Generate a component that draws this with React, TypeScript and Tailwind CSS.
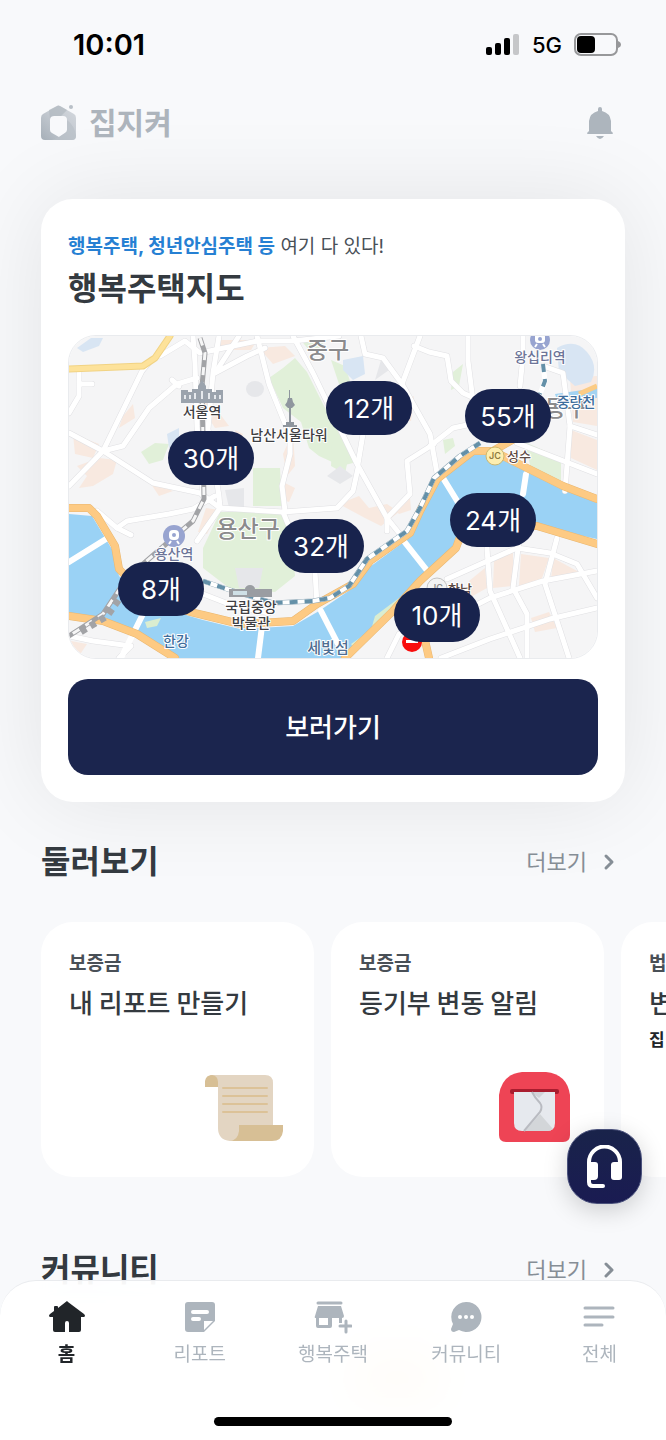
import type { ReactNode } from "react";
import { ChevronRight } from "lucide-react";

type Pin = {
  label: string;
  x: number;
  y: number;
};

type MapLabel = {
  text: string;
  x: number;
  y: number;
  size: number;
  color: string;
};

type ExploreItem = {
  category: string;
  title: string;
  note?: string;
  icon?: ReactNode;
};

type NavItem = {
  label: string;
  icon: ReactNode;
  active?: boolean;
};

const MAP_WIDTH = 528;
const MAP_HEIGHT = 322;

const pins: Pin[] = [
  { label: "12개", x: 300, y: 72 },
  { label: "55개", x: 439, y: 80 },
  { label: "30개", x: 142, y: 122 },
  { label: "24개", x: 424, y: 184 },
  { label: "32개", x: 252, y: 210 },
  { label: "8개", x: 92, y: 253 },
  { label: "10개", x: 368, y: 279 },
];

const mapLabels: MapLabel[] = [
  { text: "중구", x: 259, y: 22, size: 23, color: "#8b8b8d" },
  { text: "용산구", x: 179, y: 201, size: 23, color: "#8b8b8d" },
  { text: "동구", x: 497, y: 80, size: 23, color: "#8b8b8d" },
  { text: "왕십리역", x: 471, y: 26, size: 14, color: "#6d7598" },
  { text: "용산역", x: 105, y: 223, size: 14, color: "#6d7598" },
  { text: "서울역", x: 133, y: 81, size: 14, color: "#3f4043" },
  { text: "남산서울타워", x: 220, y: 104, size: 14, color: "#3f4043" },
  { text: "성수", x: 450, y: 125, size: 13, color: "#5c4a44" },
  { text: "한남", x: 391, y: 258, size: 13, color: "#5c4a44" },
  { text: "중랑천", x: 507, y: 71, size: 14, color: "#3d6d9c" },
  { text: "국립중앙", x: 182, y: 276, size: 14, color: "#3f4043" },
  { text: "박물관", x: 182, y: 292, size: 14, color: "#3f4043" },
  { text: "한강", x: 107, y: 310, size: 14, color: "#3d6d9c" },
  { text: "세빛섬", x: 259, y: 317, size: 15, color: "#4d6d92" },
];

const roads = [
  "M124 0L126 27L128 90L134 160",
  "M150 0L144 37L139 93L150 160L151 172L128 205",
  "M91 20L116 5L131 17L188 5L224 5L270 0",
  "M170 0L146 37L178 20L196 12",
  "M34 115L73 35L82 24",
  "M34 115L54 110L80 72L108 48L128 42M103 44L110 50",
  "M0 97L34 115L84 147L131 157L151 172",
  "M0 150L34 115",
  "M10 37V60L0 77M10 48H23",
  "M188 0L200 48L221 100V118L213 150L216 175",
  "M224 0L244 37L288 128L318 182L334 202",
  "M289 132L284 155L268 172L214 176L151 172",
  "M289 128L294 98V70",
  "M292 0L296 18L314 22L333 48L361 98L368 137",
  "M351 0L333 48M345 10L360 16L378 20L382 45L394 57L412 65",
  "M399 0V25L404 65",
  "M365 108L338 125L341 158L318 182V195",
  "M361 110L384 92L412 86",
  "M454 0V20L451 50",
  "M474 30L494 37L501 90L496 155",
  "M448 107L528 138M501 90L528 99",
  "M28 175L48 192L58 185L100 178L124 173L146 160",
  "M48 192L62 199",
  "M214 176L224 200M246 236L248 268",
  "M134 258L165 270L200 277",
  "M378 243L448 212L481 217L508 228L521 250L528 262",
  "M418 212L421 255L451 322",
  "M450 205L444 252L458 278V322",
  "M488 202L476 248L500 322",
  "M378 284L421 262L474 245L528 235",
  "M372 322L421 303L481 283L528 272",
  "M318 322L330 298L350 290",
  "M0 300L24 305L62 310L50 322",
];

const bridges = [
  "M0 226L37 203",
  "M74 278L52 322",
  "M193 290L189 322",
  "M252 275L270 310",
  "M334 204L360 237",
  "M374 142L390 168",
  "M457 138L454 158",
];

const blocks = [
  "M8 130L30 122L48 124L44 138L24 150L10 152L18 140Z",
  "M4 98L30 108L24 122L6 118Z",
  "M54 80L64 68L66 82L50 92Z",
  "M126 60L142 66L160 90L146 92Z",
  "M150 4H188L182 14H152Z",
  "M190 12L216 10L226 20L204 28Z",
  "M214 118L224 96L226 130L218 140Z",
  "M214 146L226 152L220 166L214 164Z",
  "M270 168L290 160L300 172L318 168L330 176L312 190L296 182Z",
  "M328 70L345 60L342 85L328 85Z",
  "M324 172L341 162L342 174L330 178Z",
  "M137 172L150 174L138 198L129 196Z",
  "M501 42L528 40V90L504 86Z",
  "M502 94L528 104V134L502 122Z",
  "M425 225L444 216V250L424 252Z",
  "M452 218L480 222L472 245L450 250Z",
  "M484 222L510 236L502 240L482 244Z",
  "M400 245L416 232L418 252L400 262Z",
  "M462 282L480 276L488 292L466 296Z",
  "M2 305L18 308L10 320L2 318Z",
  "M80 145L104 155L90 160Z",
  "M166 94L174 98L170 110Z",
];

const mainRoads =
  "M0 172H20L28 180L46 210L50 233Q80 268 134 279L171 288L224 285L248 268L284 248L301 225L341 197L351 175L368 143L404 115H424L448 127L494 150L528 163";
const southRoads =
  "M528 208L468 190L395 190L387 212L351 245L324 275L276 322M0 280L34 285L68 298L106 322M424 115L450 100M355 300L360 322";
const river =
  "M0 178L23 180L44 215L50 240Q80 270 134 284L171 293L224 290L250 275L284 252L302 230L343 200L368 146L404 118H424L448 130L494 153L528 167V203L468 190H395L384 214L351 242L324 272L278 322H104L68 298L34 285L0 280Z";
const railway = "M131 2L136 17L133 50L135 163L124 185L104 202L58 242L34 278L0 300";
const subway =
  "M134 245L164 255L204 267L244 265L261 262L280 250L298 223L338 195L351 172L365 142L391 120L411 107";

function SeoulMap() {
  return (
    <svg
      viewBox={`0 0 ${MAP_WIDTH} ${MAP_HEIGHT}`}
      className="block h-auto w-full"
      role="img"
      aria-label="서울 행복주택 지도"
    >
      <rect width={MAP_WIDTH} height={MAP_HEIGHT} fill="#f5f5f6" />
      {/* Neighbourhood blocks */}
      <g fill="#f8e9e0">
        {blocks.map((d) => (
          <path key={d} d={d} />
        ))}
      </g>
      {/* Parks and ponds */}
      <g fill="#e1f0d9">
        <path d="M200 42L214 32L226 22L238 36L254 68L276 108L288 126L272 130L250 120L240 112L232 86L214 72Z" />
        <path d="M184 132H211L213 170H184Z" />
        <path d="M151 176H213L222 194L226 240L206 256L160 252L134 232V212Z" />
        <path d="M72 116L86 107L100 108L94 124L80 128Z" />
        <path d="M262 24L276 30L284 54L270 48Z" />
        <path d="M264 90L280 118L276 138L262 130Z" />
        <path d="M384 36L394 28L390 50L382 54Z" />
        <path d="M456 106L492 122V148L462 134Z" />
        <path d="M374 104L384 102L386 110L376 118Z" />
        <path d="M230 2H255L252 14H240Z" />
      </g>
      <g fill="#e6e7ea">
        <ellipse cx="186" cy="53" rx="9" ry="8" />
        <path d="M156 154L175 152V172H160Z" />
        <path d="M166 232H194L190 252H170Z" />
        <path d="M258 140L271 130L284 140L271 148Z" />
        <path d="M312 24L320 34L306 44Z" />
      </g>
      <g fill="#d8e5f3">
        <path d="M8 12L22 2H34L30 10L14 16Z" />
        <path d="M98 98L110 92V108L100 112Z" />
        <path d="M274 24L294 20L296 38L284 44L274 34Z" />
        <path d="M488 12Q506 2 518 16Q530 30 522 46L506 50L490 36Z" />
      </g>
      <path d="M486 58L528 52V62L488 64Z" fill="#a3d3f2" />
      <path d="M528 50L510 58" stroke="#fbcb84" strokeWidth="5" />
      {/* River */}
      <path d={river} fill="#9ad2f5" />
      <path d="M76 286L92 282L88 290L78 292ZM302 294L306 280L330 262L324 274L286 314L282 308Z" fill="#daedd0" />
      {/* Streets */}
      <g fill="none" strokeLinejoin="round" strokeLinecap="round">
        {roads.map((d) => (
          <path key={d} d={d} stroke="#e0e0e3" strokeWidth="6" />
        ))}
        {roads.map((d) => (
          <path key={d} d={d} stroke="#ffffff" strokeWidth="5" />
        ))}
        {bridges.map((d) => (
          <path key={d} d={d} stroke="#ffffff" strokeWidth="6" />
        ))}
        <path d="M0 33L74 30L86 22L101 0" stroke="#f1d384" strokeWidth="7" />
        <path d="M0 33L74 30L86 22L101 0" stroke="#fde29a" strokeWidth="5" />
        <path d={mainRoads} stroke="#e9b771" strokeWidth="8" />
        <path d={mainRoads} stroke="#fdca83" strokeWidth="7" />
        <path d={southRoads} stroke="#e9b771" strokeWidth="8" />
        <path d={southRoads} stroke="#fdca83" strokeWidth="7" />
      </g>
      {/* Railways */}
      <g fill="none" strokeLinejoin="round">
        <path d={railway} stroke="#a2a3a6" strokeWidth="5" />
        <path d={railway} stroke="#f6f6f6" strokeWidth="3" strokeDasharray="8 7" />
        <path d="M62 246L38 280L8 298" stroke="#a2a3a6" strokeWidth="7" strokeDasharray="6 5" />
        <path d={subway} stroke="#8ba5b5" strokeWidth="5" />
        <path d={subway} stroke="#ffffff" strokeWidth="4" />
        <path d={subway} stroke="#6490a8" strokeWidth="4" strokeDasharray="8 7" />
        <path d="M474 28L476 45L471 58" stroke="#ffffff" strokeWidth="5" />
        <path d="M474 28L476 45L471 58" stroke="#6490a8" strokeWidth="4" strokeDasharray="8 7" />
      </g>
      {/* Seoul station */}
      <g fill="#9ba3ad">
        <path d="M112 54h7v2h4v-3h6v-3l2-3 2-3 2 3 2 3v3h6v3h4v-2h7v13H112z" />
        <path
          d="M115 59h2v4h-2zM120 59h2v4h-2zM125 57h2v6h-2zM132 55h2v8h-2zM139 57h2v6h-2zM145 59h2v4h-2zM150 59h2v4h-2z"
          fill="#e6e9ed"
        />
      </g>
      {/* Namsan tower */}
      <g fill="#8f969e">
        <path d="M220 54h1v8h2l1 4 2 3-3 3h-1v14h3v3h3v2h-14v-2h3v-3h3V72h-1l-3-3 2-3 1-4h1z" />
      </g>
      {/* National museum */}
      <path d="M160 253h16a5 4 0 0 1 10 0h17v8h-43z" fill="#9a9da2" />
      <path d="M164 255h14v4h-14z" fill="#cfe0e6" />
      {/* Subway markers */}
      <g>
        <circle cx="471" cy="4" r="10" fill="#98a4d0" />
        <rect x="466" y="-2" width="10" height="9" rx="3" fill="#fff" />
        <path d="M468 8l-2 3M474 8l2 3" stroke="#fff" strokeWidth="2" />
        <circle cx="471" cy="3" r="2" fill="#98a4d0" />
        <circle cx="105" cy="200" r="11" fill="#98a4d0" />
        <rect x="100" y="194" width="10" height="10" rx="4" fill="#fff" />
        <path d="M102 205l-2 3M108 205l2 3" stroke="#fff" strokeWidth="2" />
        <circle cx="105" cy="199" r="2" fill="#98a4d0" />
      </g>
      <g fontFamily="Inter, sans-serif" fontSize="9" fontWeight="600" textAnchor="middle">
        <circle cx="426" cy="120" r="9" fill="#fdeeb0" stroke="#cdb76e" />
        <text x="426" y="123" fill="#8d7a40">JC</text>
        <circle cx="368" cy="252" r="10" fill="#f3f3f3" stroke="#c5c5c5" />
        <text x="368" y="255" fill="#8c8c8c">JC</text>
      </g>
      {/* No entry sign */}
      <circle cx="343" cy="306" r="10" fill="#f80d0d" />
      <rect x="337" y="304" width="12" height="3" fill="#fff" />
      {mapLabels.map((label) => (
        <text
          key={label.text}
          x={label.x}
          y={label.y}
          fontSize={label.size}
          fill={label.color}
          stroke="#ffffff"
          strokeWidth="2"
          strokeLinejoin="round"
          paintOrder="stroke"
          fontWeight="500"
          textAnchor="middle"
        >
          {label.text}
        </text>
      ))}
    </svg>
  );
}

function ScrollIcon() {
  return (
    <svg width="80" height="72" viewBox="0 0 80 72" aria-hidden="true">
      <path d="M6 4H61Q69 4 69 12V58H40Q36 70 26 70Q14 69 14 57V16H8Z" fill="#e3d5c2" />
      <path d="M1 16V10Q2 4 8 4Q14 5 14 11V16Z" fill="#d7bf95" />
      <path d="M35 54H79V60Q78 70 68 70H26Q34 69 35 60Z" fill="#d7bf95" />
      <path d="M19 17H63M19 25H63M19 33H63M19 41H63" stroke="#dcc298" strokeWidth="2" strokeLinecap="round" />
    </svg>
  );
}

function MailboxIcon() {
  return (
    <svg width="80" height="72" viewBox="0 0 80 72" aria-hidden="true">
      <path d="M5 24Q8 3 28 1H52Q73 3 76 24V64Q76 71 69 71H12Q5 71 5 64Z" fill="#ee4455" />
      <rect x="16" y="18" width="49" height="5" rx="2" fill="#a91d2f" />
      <path d="M20 21H61V52Q61 60 53 60H28Q20 60 20 52Z" fill="#e6e9ee" />
      <path d="M37 21H51L45 27Z" fill="#d2d4d9" />
      <path d="M31 60L46 43L59 58Q57 60 53 60Z" fill="#d3d6d9" />
      <path d="M38 21Q41 27 46 32Q49 36 46 41L30 60" fill="none" stroke="#b9bbc1" strokeWidth="2" />
    </svg>
  );
}

function HomeIcon() {
  return (
    <svg width="36" height="32" viewBox="0 0 36 32" fill="currentColor" aria-hidden="true">
      <path d="M18 0 9 7V6Q9 5 8 5H6Q5 5 5 6V10L1 13Q-1 15 1 16H4V29Q4 31 6 31H16V22Q16 20 18 20T20 22V31H30Q32 31 32 29V16H35Q37 15 35 13L19 1Z" />
    </svg>
  );
}

function ReportIcon() {
  return (
    <svg width="32" height="32" viewBox="0 0 32 32" aria-hidden="true">
      <path d="M4 1H28Q31 1 31 4V20L20 31H4Q1 31 1 28V4Q1 1 4 1Z" fill="currentColor" />
      <path d="M9 11H23M9 18H15" stroke="#fff" strokeWidth="4" strokeLinecap="round" />
      <path d="M20 20H29L20 29Z" fill="#fff" />
    </svg>
  );
}

function StoreIcon() {
  return (
    <svg width="38" height="34" viewBox="0 0 38 34" aria-hidden="true">
      <path d="M4 3H27" stroke="currentColor" strokeWidth="3" strokeLinecap="round" />
      <path
        d="M4 6H27L30 16Q30 18 28 18V23H25V18H18V26Q18 28 16 28H4Q2 28 2 26V18Q0 18 1 16ZM5 18V25H14V18Z"
        fill="currentColor"
        fillRule="evenodd"
      />
      <path d="M32 21V32M26 26H37" stroke="currentColor" strokeWidth="3" strokeLinecap="round" />
    </svg>
  );
}

function ChatIcon() {
  return (
    <svg width="32" height="32" viewBox="0 0 32 32" aria-hidden="true">
      <path d="M16 1A15 15 0 1 1 9 29L4 31Q1 31 1 28L3 23A15 15 0 0 1 16 1Z" fill="currentColor" />
      <g fill="#fff">
        <circle cx="10" cy="16" r="2" />
        <circle cx="16" cy="16" r="2" />
        <circle cx="22" cy="16" r="2" />
      </g>
    </svg>
  );
}

function MenuIcon() {
  return (
    <svg width="32" height="32" viewBox="0 0 32 32" aria-hidden="true">
      <path d="M2 7H30M2 16H30M2 24H19" stroke="currentColor" strokeWidth="3" strokeLinecap="round" />
    </svg>
  );
}

const exploreItems: ExploreItem[] = [
  { category: "보증금", title: "내 리포트 만들기", icon: <ScrollIcon /> },
  { category: "보증금", title: "등기부 변동 알림", icon: <MailboxIcon /> },
  { category: "법률", title: "변호사 상담", note: "집 지켜" },
];

const navItems: NavItem[] = [
  { label: "홈", icon: <HomeIcon />, active: true },
  { label: "리포트", icon: <ReportIcon /> },
  { label: "행복주택", icon: <StoreIcon /> },
  { label: "커뮤니티", icon: <ChatIcon /> },
  { label: "전체", icon: <MenuIcon /> },
];

function StatusBar() {
  return (
    <div className="flex h-[90px] items-center justify-between pr-[45px] pl-[73px] text-black">
      <span className="text-[29px] font-semibold">10:01</span>
      <div className="flex items-center gap-3">
        <svg width="34" height="24" viewBox="0 0 34 24" aria-hidden="true">
          <rect x="0" y="14" width="6" height="8" rx="2" />
          <rect x="9" y="10" width="6" height="12" rx="2" />
          <rect x="18" y="5" width="6" height="17" rx="2" />
          <rect x="27" y="1" width="6" height="21" rx="2" fill="#c6c7c9" />
        </svg>
        <span className="text-[22px] font-medium">5G</span>
        <svg width="47" height="24" viewBox="0 0 47 24" aria-hidden="true">
          <rect x="1" y="1" width="42" height="21" rx="6" fill="none" stroke="#97989a" strokeWidth="2" />
          <rect x="3" y="3" width="18" height="17" rx="4" />
          <path d="M44 8Q47 9 47 12Q47 14 44 15Z" fill="#97989a" />
        </svg>
      </div>
    </div>
  );
}

function Header() {
  return (
    <header className="flex h-[66px] items-center justify-between pr-[53px] pl-[41px]">
      <a href="#" className="flex items-center gap-3 text-[#adb4bc]">
        <svg width="36" height="36" viewBox="0 0 36 36" aria-hidden="true">
          <defs>
            <linearGradient id="logo" x1="0" y1="1" x2="1" y2="0">
              <stop offset="0" stopColor="#a6afb8" />
              <stop offset="0.5" stopColor="#c3c9d0" />
              <stop offset="1" stopColor="#d5d9de" />
            </linearGradient>
          </defs>
          <path
            d="M16 1Q17 0 19 1L33 9Q35 10 35 13V31Q35 35 31 35H4Q0 35 0 31V13Q0 10 2 9ZM13 11Q9 11 9 15V25Q9 27 11 28L18 32L24 28Q26 27 26 25V15Q26 11 22 11Z"
            fill="url(#logo)"
            fillRule="evenodd"
          />
          <path d="M8 5L16 1Q17 0 19 1L26 5L20 11H13Q9 11 9 14Z" fill="#adb5bd" opacity="0.6" />
          <path d="M26 15Q34 21 35 31Q35 35 31 35H11L18 32L24 28Q26 27 26 25Z" fill="#b9c0c7" opacity="0.7" />
          <circle cx="30" cy="2" r="2" fill="#b9c0c7" />
        </svg>
        <span className="text-[30px] font-bold">집지켜</span>
      </a>
      <button type="button" aria-label="알림" className="text-[#adb5bd]">
        <svg width="26" height="32" viewBox="0 0 26 32" fill="currentColor" aria-hidden="true">
          <path d="M13 0Q15 0 15 2V4Q23 6 24 14V24L26 26Q26 27 25 27H1Q0 27 0 26L2 24V14Q3 6 11 4V2Q11 0 13 0Z" />
          <path d="M9 29H17Q15 32 13 32Q11 32 9 29Z" />
        </svg>
      </button>
    </header>
  );
}

function MapCard() {
  return (
    <section className="mx-[41px] mt-[43px] rounded-[32px] bg-white px-[27px] pt-[34px] pb-[27px] shadow-[0_0_90px_rgba(0,0,0,0.09)]">
      <p className="text-[19px] leading-7 text-[#495057]">
        <strong className="font-bold text-[#2680d3]">행복주택, 청년안심주택 등</strong> 여기 다 있다!
      </p>
      <h1 className="mt-1 text-[32px] leading-[48px] font-bold text-[#343a40]">행복주택지도</h1>
      <div className="relative mt-[22px] overflow-hidden rounded-[28px] border border-[#e9ebee]">
        <SeoulMap />
        {pins.map((pin) => (
          <button
            key={pin.label}
            type="button"
            className="absolute flex h-[54px] w-[86px] -translate-x-1/2 -translate-y-1/2 items-center justify-center rounded-full bg-[#18234d] text-[26px] text-white"
            style={{
              left: `${(pin.x / MAP_WIDTH) * 100}%`,
              top: `${(pin.y / MAP_HEIGHT) * 100}%`,
            }}
          >
            {pin.label}
          </button>
        ))}
      </div>
      <button
        type="button"
        className="mt-5 h-24 w-full rounded-[20px] bg-[#1b254e] text-[26px] font-medium text-white"
      >
        보러가기
      </button>
    </section>
  );
}

function SectionHeading({ title }: { title: string }) {
  return (
    <div className="flex h-14 items-center justify-between pr-[45px] pl-[41px]">
      <h2 className="text-[32px] font-bold text-[#343a40]">{title}</h2>
      <a href="#" className="flex items-center gap-2.5 text-[22px] text-[#868e96]">
        더보기
        <ChevronRight size={24} strokeWidth={3} />
      </a>
    </div>
  );
}

function ExploreCard({ item }: { item: ExploreItem }) {
  return (
    <a
      href="#"
      className="flex h-[255px] w-[273px] shrink-0 flex-col rounded-[32px] bg-white px-7 pt-7 pb-[34px] whitespace-nowrap"
    >
      <span className="text-[19px] leading-7 font-bold text-[#495057]">{item.category}</span>
      <strong className="mt-1.5 font-['Noto_Sans_CJK_KR',sans-serif] text-[26px] leading-9 font-medium text-[#343a40]">
        {item.title}
      </strong>
      {item.note && <span className="mt-1.5 text-[17px] leading-7 font-bold text-[#212529]">{item.note}</span>}
      {item.icon && <span className="mt-auto mr-0.5 self-end">{item.icon}</span>}
    </a>
  );
}

function BottomNav() {
  return (
    <nav className="fixed inset-x-0 bottom-0 h-40 rounded-t-[36px] border-t border-[#e9ebee] bg-white/90 backdrop-blur-xl">
      <ul className="grid grid-cols-5 pt-5">
        {navItems.map((item) => (
          <li key={item.label}>
            <a
              href="#"
              className={`flex flex-col items-center gap-2 ${item.active ? "text-[#212529]" : "text-[#adb5bd]"}`}
            >
              <span className="flex h-8 items-center">{item.icon}</span>
              <span className={`text-[19px] leading-7 ${item.active ? "font-bold" : ""}`}>{item.label}</span>
            </a>
          </li>
        ))}
      </ul>
      <div className="mx-auto mt-12 h-[9px] w-[238px] rounded-full bg-black" />
    </nav>
  );
}

export default function App() {
  return (
    <div className="min-h-screen overflow-x-hidden bg-[#f8f9fb] font-['Inter','Noto_Sans_CJK_KR',sans-serif]">
      <StatusBar />
      <Header />
      <main>
        <MapCard />
        <section className="mt-8">
          <SectionHeading title="둘러보기" />
          <div className="mt-8 flex gap-[17px] overflow-x-auto pl-[41px] [scrollbar-width:none]">
            {exploreItems.map((item) => (
              <ExploreCard key={item.title} item={item} />
            ))}
          </div>
        </section>
        <section className="mt-[65px]">
          <SectionHeading title="커뮤니티" />
          <div className="mx-[41px] mt-8 flex h-24 items-center justify-end rounded-[32px] bg-white pr-[180px]">
            <div className="h-10 w-24 rounded-full bg-[#ffd8a8]" />
          </div>
        </section>
      </main>
      <button
        type="button"
        aria-label="고객센터"
        className="fixed right-6 bottom-[236px] flex size-[75px] items-center justify-center rounded-[30px] border border-[#4b527c] bg-gradient-to-b from-[#19234a] to-[#1a1b52] shadow-[0_6px_24px_rgba(0,0,0,0.18)]"
      >
        <svg width="36" height="44" viewBox="0 0 36 44" aria-hidden="true">
          <path
            d="M2 22V17A15 15 0 0 1 33 17V22M2 28V37Q2 41 6 41H16"
            fill="none"
            stroke="#fff"
            strokeWidth="4"
            strokeLinecap="round"
          />
          <path d="M0 17H8Q11 17 11 20V31Q11 35 7 35H0Z" fill="#fff" />
          <path d="M27 17H35V32Q35 35 32 35H27Q24 35 24 32V20Q24 17 27 17Z" fill="#fff" />
        </svg>
      </button>
      <BottomNav />
    </div>
  );
}
